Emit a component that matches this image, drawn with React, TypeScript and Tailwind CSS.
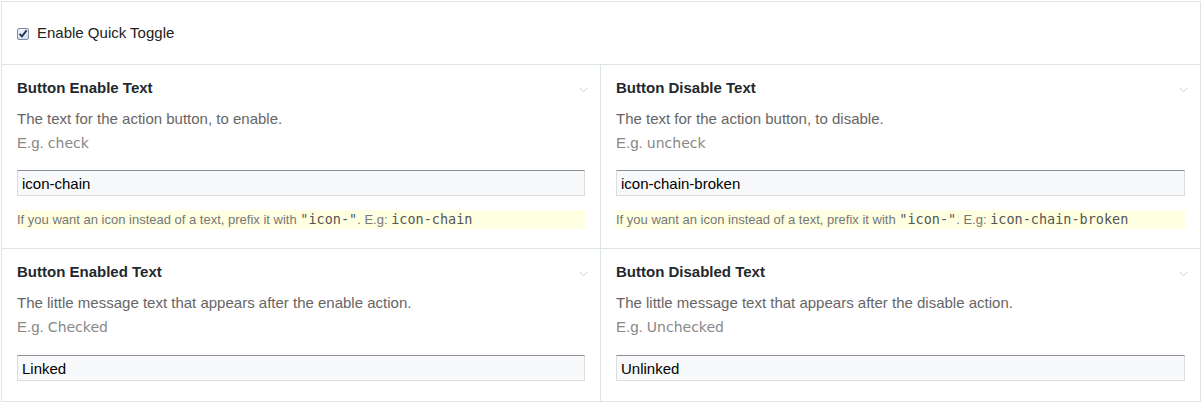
import React from "react";

interface Field {
  title: string;
  description: string;
  example: string;
  value: string;
  hint?: string;
}

const fields: Field[] = [
  {
    title: "Button Enable Text",
    description: "The text for the action button, to enable.",
    example: "check",
    value: "icon-chain",
    hint: "icon-chain",
  },
  {
    title: "Button Disable Text",
    description: "The text for the action button, to disable.",
    example: "uncheck",
    value: "icon-chain-broken",
    hint: "icon-chain-broken",
  },
  {
    title: "Button Enabled Text",
    description: "The little message text that appears after the enable action.",
    example: "Checked",
    value: "Linked",
  },
  {
    title: "Button Disabled Text",
    description: "The little message text that appears after the disable action.",
    example: "Unchecked",
    value: "Unlinked",
  },
];

const sans = "font-['Liberation_Sans',Arial,sans-serif]";
const mono = "font-['DejaVu_Sans_Mono',Menlo,monospace]";

const Chevron = () => (
  <svg width="9" height="6" viewBox="0 0 9 6" className="absolute right-[12px] top-[22px]" fill="none">
    <path d="M0.5 0.8 L4.5 4.8 L8.5 0.8" stroke="#c5cfd6" strokeWidth="1" />
  </svg>
);

const FieldCell = ({ field, right }: { field: Field; right: boolean }) => (
  <div
    className={
      "relative px-[15px] pt-[14px]" +
      (field.hint ? " pb-[19px]" : " pb-[20px]") +
      (right ? "" : " border-r border-[#dde4e8]")
    }
  >
    <Chevron />
    <div className="text-[15px] font-bold leading-[18px] text-[#23282d]">{field.title}</div>
    <div className="mt-[10px] text-[15px] leading-6 text-[#666]">{field.description}</div>
    <div className="text-[15px] leading-6 text-[#888]">
      E.g. <span className="font-['DejaVu_Sans',Verdana,sans-serif] text-[14px]">{field.example}</span>
    </div>
    <input
      readOnly
      value={field.value}
      className={
        "block h-[26px] w-full border border-[#ddd] border-t-[#8c8f94] bg-[#f8f9fa] px-[4px] text-[15px] text-black outline-none" +
        (field.hint ? " mt-[15px]" : " mt-[16px]")
      }
    />
    {field.hint && (
      <div className="mt-[14px] flex h-[19px] items-center bg-[#ffffe2] text-[13px] text-[#777]">
        <span>If you want an icon instead of a text, prefix it with&nbsp;</span>
        <span className={mono + " text-[13.5px] text-[#555]"}>"icon-"</span>
        <span>. E.g:&nbsp;</span>
        <span className={mono + " text-[13.5px] text-[#555]"}>{field.hint}</span>
      </div>
    )}
  </div>
);

export default function App() {
  return (
    <div className={sans + " bg-white"}>
      <div className="ml-px mt-px w-[1200px] border border-[#dde4e8] bg-white">
        <div className="flex h-[63px] items-center gap-[8px] border-b border-[#dde4e8] px-[15px]">
          <svg width="12" height="12" viewBox="0 0 12 12" className="mt-[2px]">
            <defs>
              <linearGradient id="cb" x1="0" y1="0" x2="0" y2="1">
                <stop offset="0" stopColor="#eef4fb" />
                <stop offset="1" stopColor="#d4e0ee" />
              </linearGradient>
            </defs>
            <rect x="0.5" y="0.5" width="11" height="11" rx="1.5" fill="url(#cb)" stroke="#7d8ea3" />
            <path d="M2.6 5.8 L5 8.4 L9.6 2.4" stroke="#1d2f5a" strokeWidth="1.8" fill="none" />
          </svg>
          <span className="text-[15px] text-[#222]">Enable Quick Toggle</span>
        </div>
        <div className="grid grid-cols-2">
          <FieldCell field={fields[0]} right={false} />
          <FieldCell field={fields[1]} right />
        </div>
        <div className="grid grid-cols-2 border-t border-[#dde4e8]">
          <FieldCell field={fields[2]} right={false} />
          <FieldCell field={fields[3]} right />
        </div>
      </div>
    </div>
  );
}
